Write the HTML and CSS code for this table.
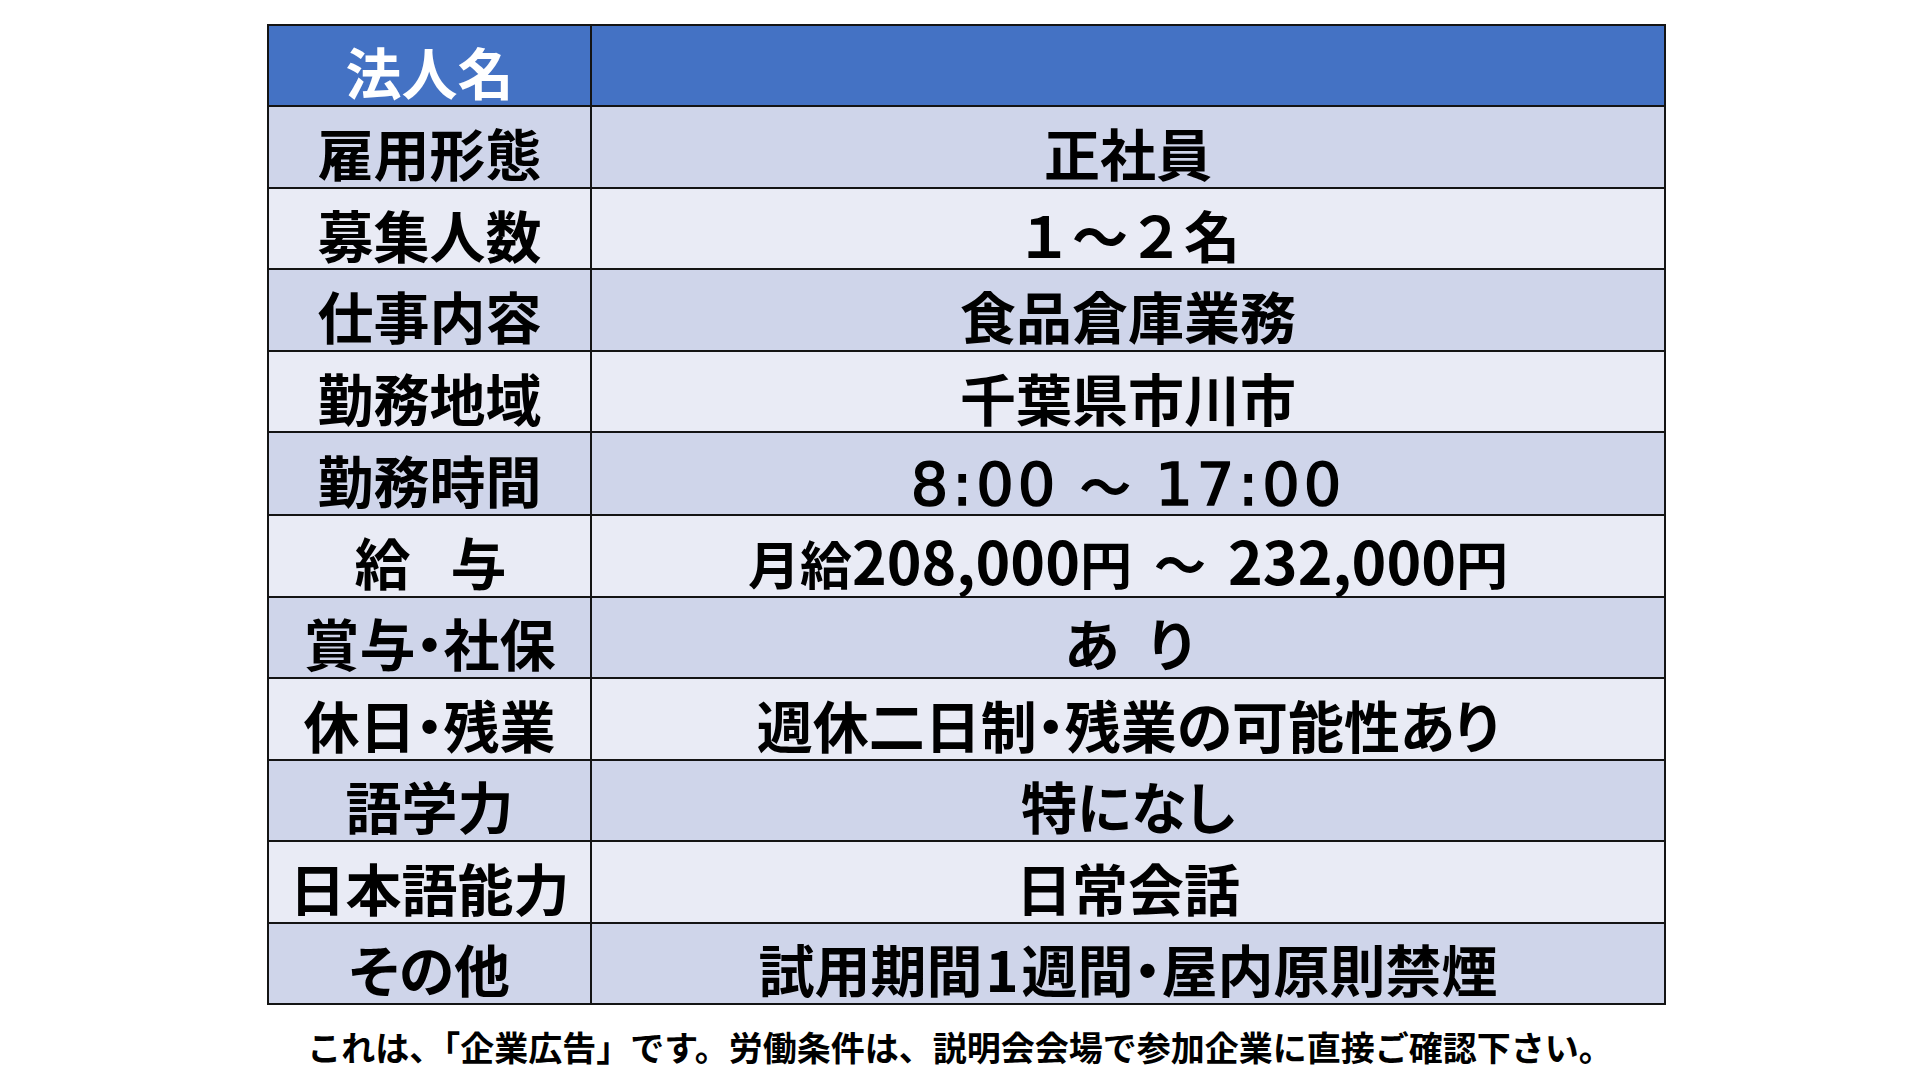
FILE: index.html
```html
<!DOCTYPE html>
<html lang="ja">
<head>
<meta charset="utf-8">
<title>求人票</title>
<link rel="stylesheet" href="styles.css">
</head>
<body>
<main class="sheet">
  <div class="grid">
    <div class="cell key">法人名</div><div class="cell val"></div>
    <div class="cell key">雇用形態</div><div class="cell val">正社員</div>
    <div class="cell key">募集人数</div><div class="cell val fixed">１～２名</div>
    <div class="cell key">仕事内容</div><div class="cell val">食品倉庫業務</div>
    <div class="cell key">勤務地域</div><div class="cell val">千葉県市川市</div>
    <div class="cell key">勤務時間</div><div class="cell val time"><span class="num">8:00</span><span class="wave">～</span><span class="num">17:00</span></div>
    <div class="cell key"><span class="kyu">給　与</span></div><div class="cell val pay">月給<span class="dig">208,000</span>円<span class="wave">～</span><span class="dig">232,000</span>円</div>
    <div class="cell key">賞与<span class="dot">・</span>社保</div><div class="cell val"><span class="ari">あ　り</span></div>
    <div class="cell key">休日<span class="dot">・</span>残業</div><div class="cell val">週休二日制<span class="dot">・</span>残業の可能性あり</div>
    <div class="cell key">語学力</div><div class="cell val">特になし</div>
    <div class="cell key">日本語能力</div><div class="cell val">日常会話</div>
    <div class="cell key">その他</div><div class="cell val">試用期間<span class="one">1</span>週間<span class="dot">・</span>屋内原則禁煙</div>
  </div>
  <p class="note">これは、「企業広告」です。労働条件は、説明会会場で参加企業に直接ご確認下さい。</p>
</main>
</body>
</html>
```

FILE: styles.css
```css
html, body {
  margin: 0;
  padding: 0;
  background: #ffffff;
}

body {
  width: 1920px;
  height: 1080px;
  overflow: hidden;
  font-family: "Noto Sans CJK JP", "Noto Sans", sans-serif;
  font-weight: 700;
  color: #000000;
}

.sheet {
  display: flex;
  flex-direction: column;
  padding-top: 24px;
}

.grid {
  box-sizing: border-box;
  width: 1399px;
  height: 981px;
  margin-left: 267px;
  display: grid;
  grid-template-columns: 321px 1072px;
  grid-template-rows: repeat(12, 1fr);
  gap: 2px;
  background: #141414;
  border: 2px solid #141414;
}

.cell {
  display: flex;
  align-items: center;
  justify-content: center;
  box-sizing: border-box;
  padding-top: 10px;
  font-size: 56px;
  line-height: 1;
  white-space: nowrap;
  font-feature-settings: "palt";
  background: #e9ebf5;
}

.cell:nth-child(4n+3),
.cell:nth-child(4n+4) {
  background: #cfd5ea;
}

.cell:nth-child(1),
.cell:nth-child(2) {
  background: #4472c4;
  color: #ffffff;
}

.fixed {
  font-feature-settings: normal;
}

.kyu {
  font-feature-settings: normal;
  letter-spacing: -8px;
  margin-right: 6px;
}

.ari {
  font-feature-settings: normal;
  letter-spacing: -16px;
  margin-right: 8px;
}

.one {
  padding: 0 3px;
}

.time {
  padding-top: 22px;
  font-family: "DejaVu Sans", "Noto Sans CJK JP", sans-serif;
  font-weight: 400;
  font-size: 59px;
  -webkit-text-stroke: 1.6px #000000;
}

.time .num {
  letter-spacing: 4px;
}

.time .wave {
  font-family: "Noto Sans CJK JP", sans-serif;
  font-weight: 700;
  font-size: 52px;
  -webkit-text-stroke: 0;
  margin: 0 24px 0 20px;
}

.pay {
  align-items: baseline;
  padding-top: 14px;
  font-size: 52px;
}

.pay .dig {
  font-size: 59px;
  font-weight: 700;
}

.pay .wave {
  font-weight: 700;
  margin: 0 22px;
}

.note {
  margin: 25px 0 0;
  text-align: center;
  font-size: 34px;
  line-height: 1;
  font-weight: 700;
}
```
